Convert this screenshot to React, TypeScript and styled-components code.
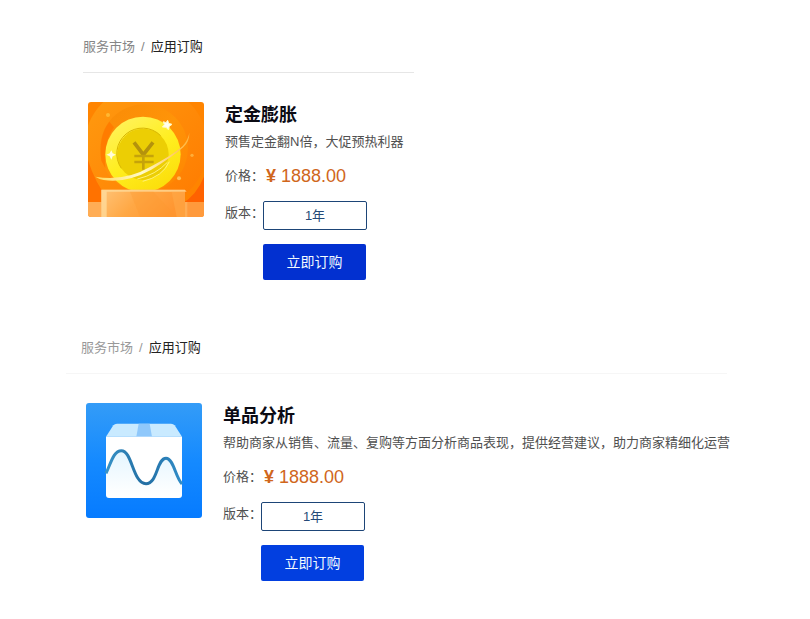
import React, { useId, useState } from "react";
import styled, { createGlobalStyle } from "styled-components";

const GlobalStyle = createGlobalStyle`
  * { box-sizing: border-box; }
  body {
    margin: 0;
    background: #fff;
    color: #505050;
    font-family: "Liberation Sans", "Noto Sans CJK SC", sans-serif;
    font-size: 13px;
    line-height: 24px;
  }
  button { font-family: inherit; cursor: pointer; }
`;

const Page = styled.main`
  display: flex;
  flex-direction: column;
  gap: 57px;
  padding: 36px 83px;
`;

const Section = styled.section<{ $wide?: boolean }>`
  margin-left: ${(p) => (p.$wide ? "-17px" : "0")};
  max-width: ${(p) => (p.$wide ? "661px" : "331px")};
`;

const Breadcrumb = styled.nav<{ $wide?: boolean }>`
  display: flex;
  gap: 6px;
  padding: 0 0 14px ${(p) => (p.$wide ? "15px" : "0")};
  border-bottom: 1px solid ${(p) => (p.$wide ? "#f6f6f6" : "#e6e6e6")};
  line-height: 22px;
  color: ${(p) => (p.$wide ? "#999" : "#868686")};
`;

const CrumbLink = styled.a`
  color: inherit;
  text-decoration: none;
`;

const Current = styled.span`
  color: #222;
`;

const Product = styled.article<{ $wide?: boolean }>`
  display: flex;
  align-items: flex-start;
  gap: 21px;
  padding: 29px 0 0 ${(p) => (p.$wide ? "20px" : "5px")};
`;

const Artwork = styled.svg`
  flex: none;
  width: 116px;
  height: 115px;
  border-radius: 3px;
`;

const Info = styled.div`
  display: flex;
  flex-direction: column;
  white-space: nowrap;
`;

const Title = styled.h2`
  margin: 0;
  color: #0b0b14;
  font-size: 18px;
  line-height: 26px;
`;

const Description = styled.p`
  margin: 4px 0 12px;
  line-height: 20px;
`;

const Field = styled.div`
  display: flex;
  align-items: flex-start;
`;

const Label = styled.span`
  width: 38px;
`;

const Price = styled.strong`
  margin: 0 0 13px 3px;
  color: #d0661c;
  font-size: 18px;
  font-weight: 400;
`;

const Currency = styled.span`
  font-weight: 700;
`;

const Option = styled.button`
  width: 104px;
  height: 29px;
  padding: 0 0 2px;
  border: 1px solid #1d4577;
  border-radius: 2px;
  background: #fff;
  color: #254a78;
  font-size: 13px;
`;

const OrderButton = styled.button<{ $bright?: boolean }>`
  width: 103px;
  height: 36px;
  margin: 14px 0 0 38px;
  padding: 0 0 2px;
  border: 0;
  border-radius: 2px;
  background: ${(p) => (p.$bright ? "#023fe0" : "#0230d0")};
  color: #f2fbff;
  font-size: 14px;
`;

function CoinArt() {
  return (
    <Artwork viewBox="54 36 348 345" preserveAspectRatio="none" aria-hidden="true">
      <defs>
        <linearGradient id="coinBg" x1="0" y1="0" x2="1" y2="1">
          <stop offset="0" stopColor="#ff9c10" />
          <stop offset="1" stopColor="#ff7a00" />
        </linearGradient>
        <linearGradient id="coinHalo" x1="0" y1="0" x2="1" y2="1">
          <stop offset="0" stopColor="#f98b07" />
          <stop offset="0.5" stopColor="#ff9408" />
          <stop offset="1" stopColor="#ff8500" />
        </linearGradient>
        <linearGradient id="coinRim" x1="0.2" y1="0" x2="0.8" y2="1">
          <stop offset="0" stopColor="#fff25c" />
          <stop offset="0.5" stopColor="#ffee20" />
          <stop offset="1" stopColor="#fbdc08" />
        </linearGradient>
        <linearGradient id="coinStep" x1="0" y1="0" x2="1" y2="0.3">
          <stop offset="0" stopColor="#ffc377" />
          <stop offset="0.5" stopColor="#ffa845" />
          <stop offset="1" stopColor="#ff9631" />
        </linearGradient>
        <linearGradient id="coinTrail" x1="0" y1="0" x2="1" y2="0">
          <stop offset="0" stopColor="#ffd95b" />
          <stop offset="0.5" stopColor="#fffbc9" />
          <stop offset="1" stopColor="#ffb43c" />
        </linearGradient>
      </defs>
      <rect x="54" y="36" width="348" height="345" fill="#ff8400" />
      <circle cx="228" cy="170" r="185" fill="url(#coinBg)" />
      <path d="M54 210Q75 280 120 336H54Z" fill="#ff7200" />
      <path d="M402 260Q380 315 335 342H402Z" fill="#ff6200" />
      <circle cx="222" cy="175" r="132" fill="url(#coinHalo)" />
      <path d="M118 95Q84 140 94 212L106 235Q98 160 132 112Z" fill="#ff7c00" />
      <path d="M54 336H402V381H54Z" fill="#ffad55" />
      <path d="M352 336H402V381H352Z" fill="#ff9a3c" />
      <circle cx="219" cy="193" r="113" fill="url(#coinRim)" />
      <circle cx="219" cy="193" r="77" fill="#ecce04" />
      <path d="M154 235A77 77 0 0 1 272 137" fill="none" stroke="#d8b600" strokeWidth="3" />
      <path d="M192 157L220 194L249 157" fill="none" stroke="#b4920c" strokeWidth="11" />
      <path d="M220 194V239M193 198H251M193 216H251" fill="none" stroke="#c5a30a" strokeWidth="8" />
      <path d="M94 299H345V381H94Z" fill="url(#coinStep)" />
      <path d="M94 299H345L350 305H110V381H94Z" fill="#ffe0a2" opacity="0.7" />
      <path d="M180 305H250L320 381H210Z" fill="#fb982e" opacity="0.3" />
      <path d="M305 305H345V381H320Z" fill="#ffb153" opacity="0.4" />
      <path d="M76 260Q165 275 240 231Q310 194 338 168Q354 150 358 128Q359 154 340 172Q300 206 244 239Q170 280 101 270Q86 267 76 260Z" fill="url(#coinTrail)" />
      <path d="M202 267Q258 254 292 217M218 274Q278 260 298 215" fill="none" stroke="#fff27a" strokeWidth="3" />
      <path d="M293 91L296 100L306 103L298 109L295 119L288 112L277 111L283 104L280 95L288 98Z" fill="#fffef0" stroke="#fff9be" strokeWidth="3" />
      <path d="M124 181L128 190L138 194L128 199L124 209L119 199L109 194L119 190Z" fill="#fffcdb" />
      <circle cx="114" cy="75" r="6" fill="#ffb732" />
      <circle cx="327" cy="265" r="6" fill="#ffc050" />
      <circle cx="366" cy="196" r="5" fill="#ffad38" />
    </Artwork>
  );
}

function ChartArt() {
  return (
    <Artwork viewBox="48 39 348 345" preserveAspectRatio="none" aria-hidden="true">
      <defs>
        <linearGradient id="chartBg" x1="0" y1="0" x2="0" y2="1">
          <stop offset="0" stopColor="#349cf7" />
          <stop offset="0.5" stopColor="#158aff" />
          <stop offset="1" stopColor="#067bff" />
        </linearGradient>
        <linearGradient id="chartFill" x1="0" y1="0" x2="0" y2="1">
          <stop offset="0" stopColor="#d8f1ff" />
          <stop offset="1" stopColor="#fff" />
        </linearGradient>
        <linearGradient id="chartLine" x1="0" y1="0" x2="1" y2="0">
          <stop offset="0" stopColor="#3792c7" />
          <stop offset="0.5" stopColor="#226ea3" />
          <stop offset="1" stopColor="#318dc8" />
        </linearGradient>
      </defs>
      <rect x="48" y="39" width="348" height="345" fill="url(#chartBg)" />
      <path d="M108 140L130 106Q134 101 141 101H303Q310 101 314 106L336 140Z" fill="#c9eaff" />
      <path d="M206 101H239L246 140H199Z" fill="#8fc8fb" />
      <path d="M108 140H336V315Q336 324 327 324H117Q108 324 108 315Z" fill="#fff" />
      <path d="M108 250C122 222 130 182 154 182C187 182 188 281 228 281C263 281 260 205 288 205C311 205 316 262 336 282V315H108Z" fill="url(#chartFill)" opacity="0.7" />
      <path d="M108 250C122 222 130 182 154 182C187 182 188 281 228 281C263 281 260 205 288 205C311 205 316 262 336 282" fill="none" stroke="url(#chartLine)" strokeWidth="9" />
    </Artwork>
  );
}

interface OrderProps {
  title: string;
  description: string;
  art: React.ReactNode;
  wide?: boolean;
}

function OrderSection({ title, description, art, wide }: OrderProps) {
  const labelId = useId();
  const [selected, setSelected] = useState(true);
  return (
    <Section $wide={wide}>
      <Breadcrumb $wide={wide} aria-label={title}>
        <CrumbLink href="#market">服务市场</CrumbLink>
        <span>/</span>
        <Current aria-current="page">应用订购</Current>
      </Breadcrumb>
      <Product $wide={wide}>
        {art}
        <Info>
          <Title>{title}</Title>
          <Description>{description}</Description>
          <Field>
            <Label>价格：</Label>
            <Price><Currency>¥</Currency> 1888.00</Price>
          </Field>
          <Field role="group" aria-labelledby={labelId}>
            <Label id={labelId}>版本：</Label>
            <Option type="button" aria-pressed={selected} onClick={() => setSelected(!selected)}>1年</Option>
          </Field>
          <OrderButton type="button" $bright={wide}>立即订购</OrderButton>
        </Info>
      </Product>
    </Section>
  );
}

export default function App() {
  return (
    <>
      <GlobalStyle />
      <Page>
        <OrderSection title="定金膨胀" description="预售定金翻N倍，大促预热利器" art={<CoinArt />} />
        <OrderSection
          wide
          title="单品分析"
          description="帮助商家从销售、流量、复购等方面分析商品表现，提供经营建议，助力商家精细化运营"
          art={<ChartArt />}
        />
      </Page>
    </>
  );
}
